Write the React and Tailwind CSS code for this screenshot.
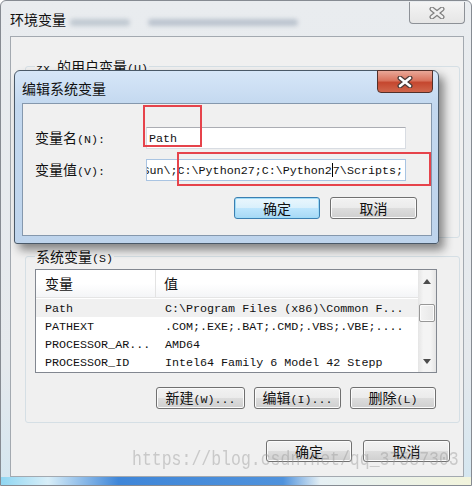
import React from 'react'

const cjk = "font-['Noto_Sans_CJK_SC',sans-serif] text-[14px] leading-[16px]"
const mono = "font-['Liberation_Mono','Noto_Sans_CJK_SC',monospace] text-[11.7px] leading-[16px]"

// splits a label into CJK runs (14px) and latin runs (narrow mono), like SimSun does
function Txt({ children, className = '' }) {
  const parts = String(children).split(/([\u3000-\u9fff\uff00-\uffef]+)/).filter(Boolean)
  return (
    <span className={`whitespace-pre text-[#111] ${className}`}>
      {parts.map((p, i) => (
        <span key={i} className={/[\u3000-\u9fff]/.test(p) ? cjk : mono}>{p}</span>
      ))}
    </span>
  )
}

function Button({ label, className = '', focus }) {
  return (
    <div
      className={`flex h-[22px] items-center justify-center rounded-[3px] border ${
        focus
          ? 'border-[#3c7fb1] bg-[linear-gradient(#eaf6fd,#d9f0fc_50%,#bee6fd_51%,#a7d9f5)] shadow-[inset_0_0_0_1px_#9fdcf8]'
          : 'border-[#707070] bg-[linear-gradient(#f2f2f2,#ebebeb_50%,#dddddd_51%,#cfcfcf)] shadow-[inset_0_0_0_1px_#fbfbfb]'
      } ${className}`}
    >
      <Txt>{label}</Txt>
    </div>
  )
}

function CloseX({ fill, stroke }) {
  return (
    <svg width="16" height="12" viewBox="0 0 16 12">
      <path d="M3 2 L13 10 M13 2 L3 10" stroke={stroke} strokeWidth="5" strokeLinecap="round" fill="none" />
      <path d="M3 2 L13 10 M13 2 L3 10" stroke={fill} strokeWidth="2.6" strokeLinecap="round" fill="none" />
    </svg>
  )
}

function Arrow({ up }) {
  return (
    <svg width="8" height="5" viewBox="0 0 8 5">
      <polygon points={up ? '0,5 4,0 8,5' : '0,0 8,0 4,5'} fill="#4d4d4d" />
    </svg>
  )
}

const rows = [
  ['Path', 'C:\\Program Files (x86)\\Common F...'],
  ['PATHEXT', '.COM;.EXE;.BAT;.CMD;.VBS;.VBE;....'],
  ['PROCESSOR_AR...', 'AMD64'],
  ['PROCESSOR_ID', 'Intel64 Family 6 Model 42 Stepp'],
]

export default function App() {
  return (
    <div className="relative flex h-[486px] w-[472px] flex-col overflow-hidden rounded-t-[6px] border border-[#868b92] bg-[linear-gradient(180deg,#e9ecef,#e5e9ed_75%,#d4e6f0)] text-[14px] leading-[16px]">
      {/* outer title bar */}
      <div className="flex h-[35px] items-start justify-between">
        <div className="flex items-start">
          <div className="ml-[9px] mt-[10px]">
            <Txt>环境变量</Txt>
          </div>
          <div className="ml-[4px] mt-[18px] h-[7px] w-[60px] rounded-full bg-[#9aa7b6]/50 blur-[2px]" />
          <div className="ml-[18px] mt-[18px] h-[7px] w-[150px] rounded-full bg-[#8f9db0]/50 blur-[2px]" />
        </div>
        <div className="mr-[6px] mt-[1px] flex h-[22px] w-[56px] items-center justify-center rounded-b-[4px] border border-t-0 border-[#8d9197] bg-[linear-gradient(#f4f4f4,#e6e6e6)]">
          <CloseX fill="#f0f0f0" stroke="#808080" />
        </div>
      </div>

      {/* main panel */}
      <div className="ml-[9px] h-[441px] w-[454px] border border-[#a3a9b0] bg-[#f0f0f0]">
        <div className="relative ml-[14px] mt-[29px] h-[172px] w-[435px] rounded-[3px] border border-[#d5dfe5]">
          <div className="absolute -top-[9px] left-[9px] bg-[#f0f0f0] px-[1px]">
            <Txt>zx 的用户变量(U)</Txt>
          </div>
        </div>

        <div className="relative ml-[14px] mt-[18px] h-[167px] w-[435px] rounded-[3px] border border-[#d5dfe5]">
          <div className="absolute -top-[9px] left-[9px] bg-[#f0f0f0] px-[1px]">
            <Txt>系统变量(S)</Txt>
          </div>

          <div className="ml-[9px] mt-[12px] flex h-[104px] w-[402px] border border-[#828790] bg-white">
            <div className="flex-1 overflow-hidden">
              <div className="flex h-[28px] items-center border-b border-[#e5e5e5] bg-[linear-gradient(#ffffff,#ffffff_50%,#f4f5f7)]">
                <div className="flex h-full w-[120px] items-center border-r border-[#e3e3e3] pl-[9px]">
                  <Txt>变量</Txt>
                </div>
                <div className="pl-[8px]">
                  <Txt>值</Txt>
                </div>
              </div>
              <div className="mt-[1px]">
                {rows.map(([k, v], i) => (
                  <div key={k} className={`flex h-[18px] items-center ${i === 0 ? 'bg-[#f0f0f0]' : ''}`}>
                    <div className="w-[120px] pl-[9px]">
                      <Txt>{k}</Txt>
                    </div>
                    <div className="pl-[9px]">
                      <Txt>{v}</Txt>
                    </div>
                  </div>
                ))}
              </div>
            </div>
            <div className="flex w-[18px] flex-col bg-[linear-gradient(90deg,#e5e5e5,#f4f4f4_30%,#f4f4f4_70%,#e5e5e5)]">
              <div className="flex h-[22px] items-center justify-center">
                <Arrow up />
              </div>
              <div className="mx-[1px] mt-[12px] h-[18px] rounded-[2px] border border-[#979797] bg-[linear-gradient(90deg,#f3f3f3,#e7e7e7)] shadow-[inset_0_0_0_1px_#fbfbfb]" />
              <div className="mt-auto flex h-[22px] items-center justify-center">
                <Arrow />
              </div>
            </div>
          </div>

          <div className="mt-[14px] flex justify-end gap-[9px] pr-[22px]">
            <Button label="新建(W)..." className="w-[89px]" />
            <Button label="编辑(I)..." className="w-[87px]" />
            <Button label="删除(L)" className="mr-[1px] w-[86px]" />
          </div>
        </div>

        <div className="mt-[17px] flex justify-end gap-[11px] pr-[13px]">
          <Button label="确定" className="w-[86px]" />
          <Button label="取消" className="w-[87px]" />
        </div>
      </div>

      {/* bottom aero frame */}
      <div className="mt-auto h-[8px] bg-[linear-gradient(90deg,#8fd6f2,#d8eef8_10%,#3f86d8_25%,#4f92dc_60%,#e6f0f4_68%,#f2f4dc)]" />

      {/* edit dialog (overlaps the window) */}
      <div className="absolute left-[13px] top-[69px] flex h-[174px] w-[425px] flex-col rounded-t-[6px] rounded-b-[3px] border border-[#4a5968] bg-[linear-gradient(180deg,#d6e6f8,#c3d8ef_20%,#bed4ec)] shadow-[5px_6px_10px_rgba(0,0,0,0.45)]">
        <div className="flex h-[32px] items-start justify-between">
          <div className="ml-[7px] mt-[9px]">
            <Txt>编辑系统变量</Txt>
          </div>
          <div className="-mt-[1px] mr-[5px] flex h-[23px] w-[56px] items-center justify-center rounded-b-[4px] border border-[#52302a] bg-[linear-gradient(#e9a898,#d9745e_45%,#c5472f_55%,#d0664c)]">
            <CloseX fill="#ffffff" stroke="#4a3a38" />
          </div>
        </div>
        <div className="ml-[7px] h-[133px] w-[410px] border border-[#8598ad] bg-[#f0f0f0]">
          <div className="mt-[23px] flex items-center">
            <div className="w-[123px] pl-[12px]">
              <Txt>变量名(N):</Txt>
            </div>
            <div className="flex h-[22px] w-[260px] items-center border border-[#d8dce2] border-t-[#abadb3] bg-white pl-[2px]">
              <Txt>Path</Txt>
            </div>
          </div>
          <div className="mt-[10px] flex items-center">
            <div className="w-[123px] pl-[12px]">
              <Txt>变量值(V):</Txt>
            </div>
            <div className="flex h-[22px] w-[260px] items-center justify-end overflow-hidden border border-[#a9c4e2] bg-white pr-[2px]">
              <span className="whitespace-pre">
                <Txt>C:\ProgramData\Oracle\Java\Sun\;C:\Python27;C:\Python2</Txt>
                <span className="inline-block h-[14px] w-0 border-l border-black align-middle" />
                <Txt>7\Scripts;</Txt>
              </span>
            </div>
          </div>
          <div className="mt-[16px] flex justify-end gap-[10px] pr-[14px]">
            <Button label="确定" focus className="w-[86px]" />
            <Button label="取消" className="w-[87px]" />
          </div>
        </div>
      </div>

      {/* red annotation boxes */}
      <div className="absolute left-[142px] top-[104px] h-[42px] w-[59px] border-2 border-solid border-[#e6434b]" />
      <div className="absolute left-[176px] top-[151px] h-[34px] w-[254px] border-2 border-solid border-[#e6434b]" />

      {/* watermark */}
      <div className="pointer-events-none absolute left-[131px] top-[451px] origin-bottom-left scale-y-[1.2] font-['Liberation_Mono',monospace] text-[16.5px] leading-[20px] text-[#9a9a9a]/45">
        https://blog.csdn.net/qq_37587303
      </div>
    </div>
  )
}
